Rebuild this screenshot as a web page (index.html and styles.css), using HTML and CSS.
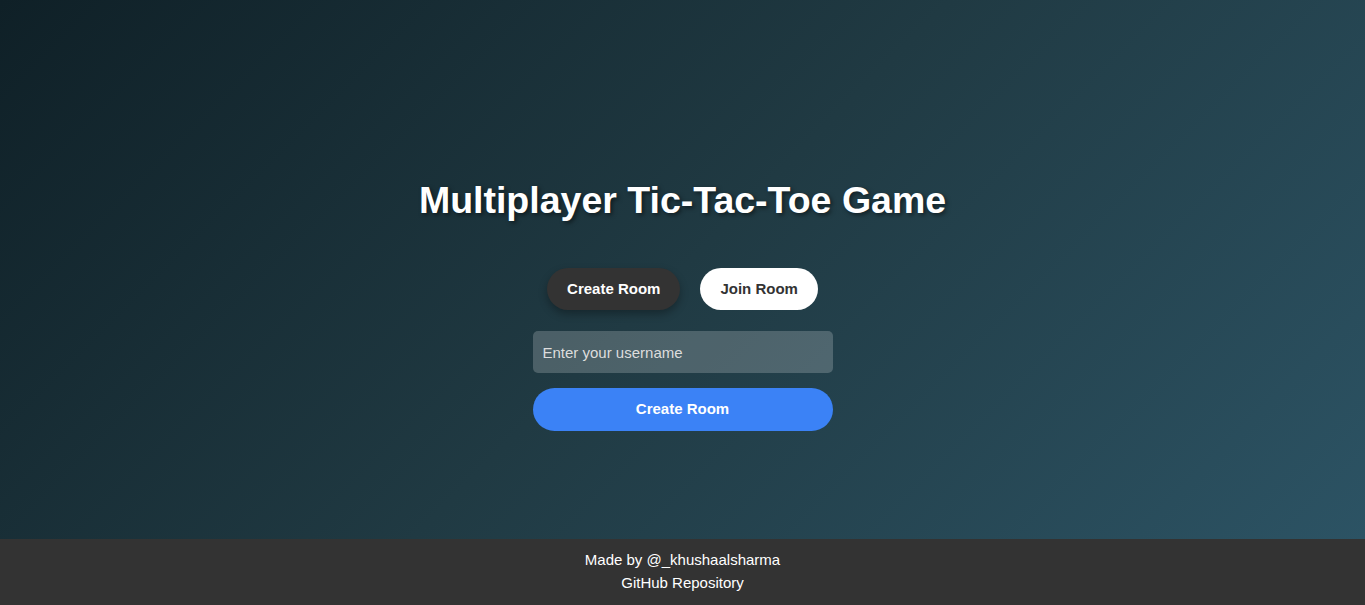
FILE: index.html
```html
<!DOCTYPE html>
<html lang="en">
<head>
<meta charset="utf-8">
<title>Multiplayer Tic-Tac-Toe Game</title>
<link rel="stylesheet" href="styles.css">
</head>
<body>
<main class="main">
  <h1 class="title">Multiplayer Tic-Tac-Toe Game</h1>
  <div class="tabs">
    <button class="tab tab-active">Create Room</button>
    <button class="tab tab-idle">Join Room</button>
  </div>
  <form class="form">
    <input class="input" type="text" placeholder="Enter your username">
    <button class="submit" type="button">Create Room</button>
  </form>
</main>
<footer class="footer">
  <p class="footer-line">Made by @_khushaalsharma</p>
  <p class="footer-line">GitHub Repository</p>
</footer>
</body>
</html>
```

FILE: styles.css
```css
* { box-sizing: border-box; }
html, body { margin: 0; height: 100%; }
body {
  font-family: "Liberation Sans", Arial, sans-serif;
  display: flex;
  flex-direction: column;
  color: #fff;
  background: #333;
}
.main {
  flex: 1;
  display: flex;
  flex-direction: column;
  align-items: center;
  padding-top: 179px;
  background: linear-gradient(135deg, #0f2027 0%, #203a43 50%, #2c5364 100%);
}
.title {
  margin: 0;
  font-size: 37.5px;
  line-height: 42px;
  font-weight: bold;
  text-shadow: 2px 2px 4px rgba(0,0,0,0.5);
}
.tabs {
  display: flex;
  gap: 20px;
  margin-top: 47px;
}
.tab {
  font-family: inherit;
  font-size: 15px;
  font-weight: bold;
  line-height: 18px;
  padding: 12px 20px;
  border: none;
  border-radius: 21px;
}
.tab-active {
  background: #333;
  color: #fff;
  box-shadow: 0 4px 8px rgba(0,0,0,0.3);
}
.tab-idle {
  background: #fff;
  color: #333;
}
.form {
  display: flex;
  flex-direction: column;
  gap: 15px;
  width: 300px;
  margin-top: 21px;
}
.input {
  height: 42px;
  padding: 0 10px;
  border: none;
  border-radius: 5px;
  background: rgba(255,255,255,0.2);
  color: #fff;
  font-family: inherit;
  font-size: 15px;
}
.input::placeholder { color: #ddd; }
.submit {
  height: 43px;
  padding: 0 0 2px;
  border: none;
  border-radius: 22px;
  background: #3b82f6;
  color: #fff;
  font-family: inherit;
  font-size: 15px;
  font-weight: bold;
}
.footer {
  background: #333;
  padding: 9px 0 11px;
  text-align: center;
}
.footer-line {
  margin: 0;
  font-size: 15px;
  line-height: 23px;
}
```
